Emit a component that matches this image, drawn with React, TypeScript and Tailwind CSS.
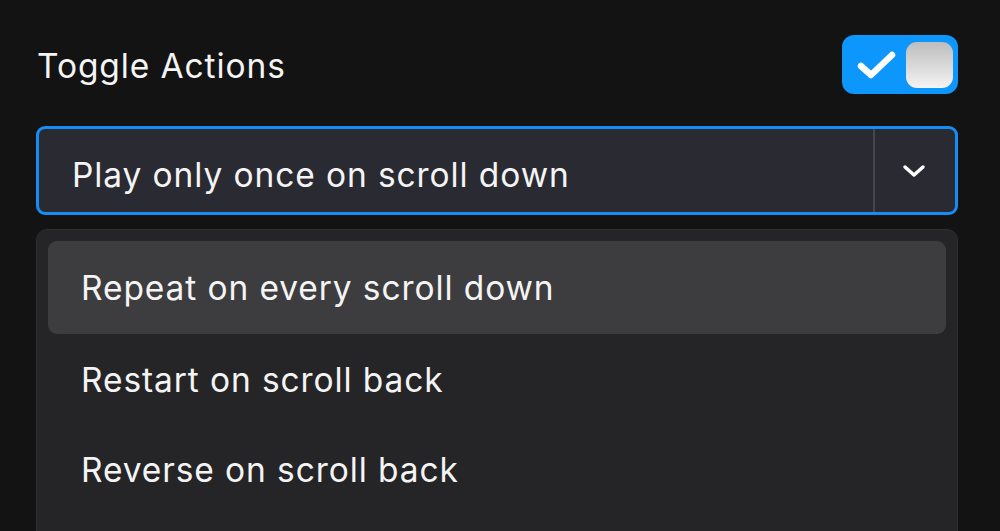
import React from "react";

export default function App() {
  const font = { fontFamily: "Inter, 'Noto Sans', sans-serif" };
  return (
    <div className="w-[1000px] h-[531px] overflow-hidden bg-[#131313] text-[#f4f4f4] pl-[36px] pr-[42px]" style={font}>
      <div className="flex items-center justify-between pt-[35px] h-[94px]">
        <span className="text-[33.5px] tracking-[0.9px] leading-none pl-[1px] pt-[4px]">Toggle Actions</span>
        <div className="w-[116px] h-[59px] rounded-[12px] bg-[#0d96fb] flex items-center justify-between pl-[15px] pr-[5px]">
          <svg width="40" height="28" viewBox="0 0 40 28" className="mt-[1px]">
            <path d="M4 15 L14 24 L35 4" fill="none" stroke="white" strokeWidth="6.5" strokeLinecap="round" strokeLinejoin="round" />
          </svg>
          <div className="w-[47px] h-[46px] rounded-[11px] bg-gradient-to-b from-[#bdbdbd] to-[#f4f4f4]" />
        </div>
      </div>
      <div className="mt-[32px] h-[89px] rounded-[9px] border-[3px] border-[#168cf5] bg-[#2a2a32] flex items-stretch">
        <div className="flex-1 flex items-center pl-[33px] pt-[10px] text-[33.5px] tracking-[0.9px] leading-none">Play only once on scroll down</div>
        <div className="w-[2px] bg-[#45454c]" />
        <div className="w-[80px] flex items-center justify-center">
          <svg width="24" height="14" viewBox="0 0 24 14" className="mt-[0px] ml-[-2px]">
            <path d="M3 3 L12 11 L21 3" fill="none" stroke="white" strokeWidth="3.5" strokeLinecap="round" strokeLinejoin="round" />
          </svg>
        </div>
      </div>
      <div className="mt-[14px] rounded-[11px] bg-[#252527] border border-[#2e2e30] p-[11px] h-[320px]">
        <div className="h-[93px] rounded-[9px] bg-[#3d3d3f] flex items-center pl-[33px] text-[33.5px] tracking-[0.9px] leading-none pt-[2px]">Repeat on every scroll down</div>
        <div className="h-[91px] flex items-center pl-[33px] text-[33.5px] tracking-[0.9px] leading-none pt-[2px]">Restart on scroll back</div>
        <div className="h-[89px] flex items-center pl-[33px] text-[33.5px] tracking-[0.9px] leading-none pt-[2px]">Reverse on scroll back</div>
      </div>
    </div>
  );
}
